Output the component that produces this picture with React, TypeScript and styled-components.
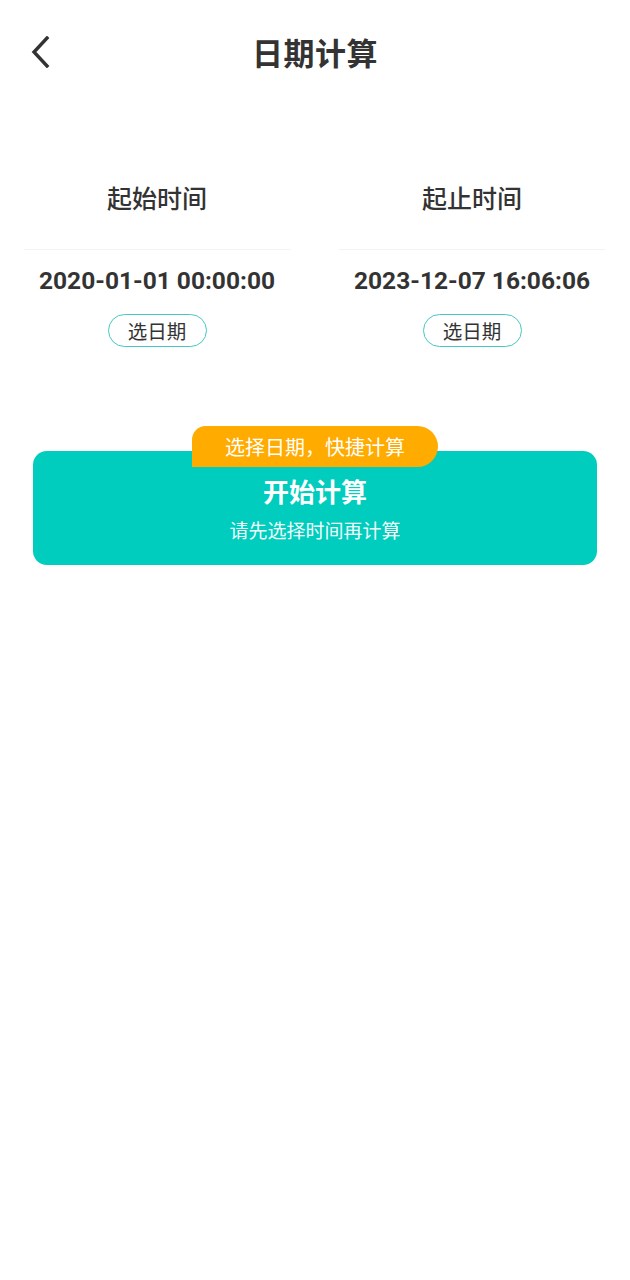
import React from "react";
import styled, { createGlobalStyle } from "styled-components";

const GlobalStyle = createGlobalStyle`
  html, body {
    margin: 0;
    padding: 0;
    background: #ffffff;
  }
  body {
    font-family: Roboto, "Noto Sans CJK SC", "Noto Sans", sans-serif;
    color: #333333;
  }
`;

const Page = styled.div`
  width: 630px;
  min-height: 1280px;
  background: #ffffff;
  display: flex;
  flex-direction: column;
`;

const NavBar = styled.header`
  position: relative;
  height: 104px;
  display: flex;
  justify-content: center;
  align-items: flex-start;
  box-sizing: border-box;
  padding-top: 32px;
`;

const BackButton = styled.button`
  position: absolute;
  left: 26px;
  top: 34px;
  width: 28px;
  height: 36px;
  padding: 0;
  border: 0;
  background: none;
  display: flex;
  align-items: center;
  justify-content: center;
  cursor: pointer;
`;

const Title = styled.h1`
  margin: 0;
  font-family: "Noto Sans CJK SC", sans-serif;
  font-size: 31px;
  font-weight: 700;
  line-height: 40px;
  color: #333333;
  letter-spacing: 0.5px;
`;

const Columns = styled.section`
  display: grid;
  grid-template-columns: 266px 266px;
  justify-content: space-between;
  padding: 76px 25px 0 24px;
`;

const Column = styled.div`
  display: flex;
  flex-direction: column;
  align-items: center;
`;

const ColumnLabel = styled.div`
  font-family: "Noto Sans CJK SC", sans-serif;
  font-size: 25px;
  font-weight: 500;
  line-height: 34px;
  color: #333333;
  width: 100%;
  text-align: center;
  padding-bottom: 35px;
  border-bottom: 1px solid #f3f3f3;
`;

const DateText = styled.div`
  margin-top: 15px;
  font-family: Roboto, sans-serif;
  font-size: 24.5px;
  font-weight: 700;
  line-height: 32px;
  color: #333333;
  white-space: nowrap;
`;

const PickButton = styled.button`
  margin-top: 17px;
  width: 99px;
  height: 33px;
  box-sizing: border-box;
  border: 1px solid #45c7c5;
  border-radius: 17px;
  background: #ffffff;
  font-family: "Noto Sans CJK SC", sans-serif;
  font-size: 19.5px;
  line-height: 30px;
  color: #333333;
  padding: 0;
  cursor: pointer;
`;

const ActionArea = styled.section`
  position: relative;
  margin: 104px 33px 0 33px;
`;

const Badge = styled.div`
  position: absolute;
  top: -25px;
  left: 50%;
  transform: translateX(-50%);
  width: 246px;
  height: 41px;
  box-sizing: border-box;
  background: #ffab00;
  border-radius: 14px 21px 21px 0;
  font-family: "Noto Sans CJK SC", sans-serif;
  font-size: 20px;
  line-height: 41px;
  color: #ffffff;
  text-align: center;
  white-space: nowrap;
`;

const StartCard = styled.button`
  width: 100%;
  height: 114px;
  border: 0;
  border-radius: 14px;
  background: #00cdbd;
  display: flex;
  flex-direction: column;
  align-items: center;
  padding: 22px 0 0;
  box-sizing: border-box;
  cursor: pointer;
`;

const StartTitle = styled.div`
  font-family: "Noto Sans CJK SC", sans-serif;
  font-size: 26px;
  font-weight: 700;
  line-height: 36px;
  color: #ffffff;
`;

const StartHint = styled.div`
  margin-top: 7px;
  font-family: "Noto Sans CJK SC", sans-serif;
  font-size: 19px;
  line-height: 28px;
  color: #f2fffd;
`;

const ChevronLeft = () => (
  <svg width="22" height="32" viewBox="0 0 22 32" fill="none">
    <path
      d="M18 2 L5 16 L18 30"
      stroke="#333333"
      strokeWidth="3.4"
      strokeLinecap="square"
      strokeLinejoin="miter"
    />
  </svg>
);

type Slot = { label: string; value: string };

const slots: Slot[] = [
  { label: "起始时间", value: "2020-01-01 00:00:00" },
  { label: "起止时间", value: "2023-12-07 16:06:06" },
];

export default function App() {
  return (
    <>
      <GlobalStyle />
      <Page>
        <NavBar>
          <BackButton aria-label="返回">
            <ChevronLeft />
          </BackButton>
          <Title>日期计算</Title>
        </NavBar>

        <Columns>
          {slots.map((s) => (
            <Column key={s.label}>
              <ColumnLabel>{s.label}</ColumnLabel>
              <DateText>{s.value}</DateText>
              <PickButton>选日期</PickButton>
            </Column>
          ))}
        </Columns>

        <ActionArea>
          <Badge>选择日期，快捷计算</Badge>
          <StartCard>
            <StartTitle>开始计算</StartTitle>
            <StartHint>请先选择时间再计算</StartHint>
          </StartCard>
        </ActionArea>
      </Page>
    </>
  );
}
